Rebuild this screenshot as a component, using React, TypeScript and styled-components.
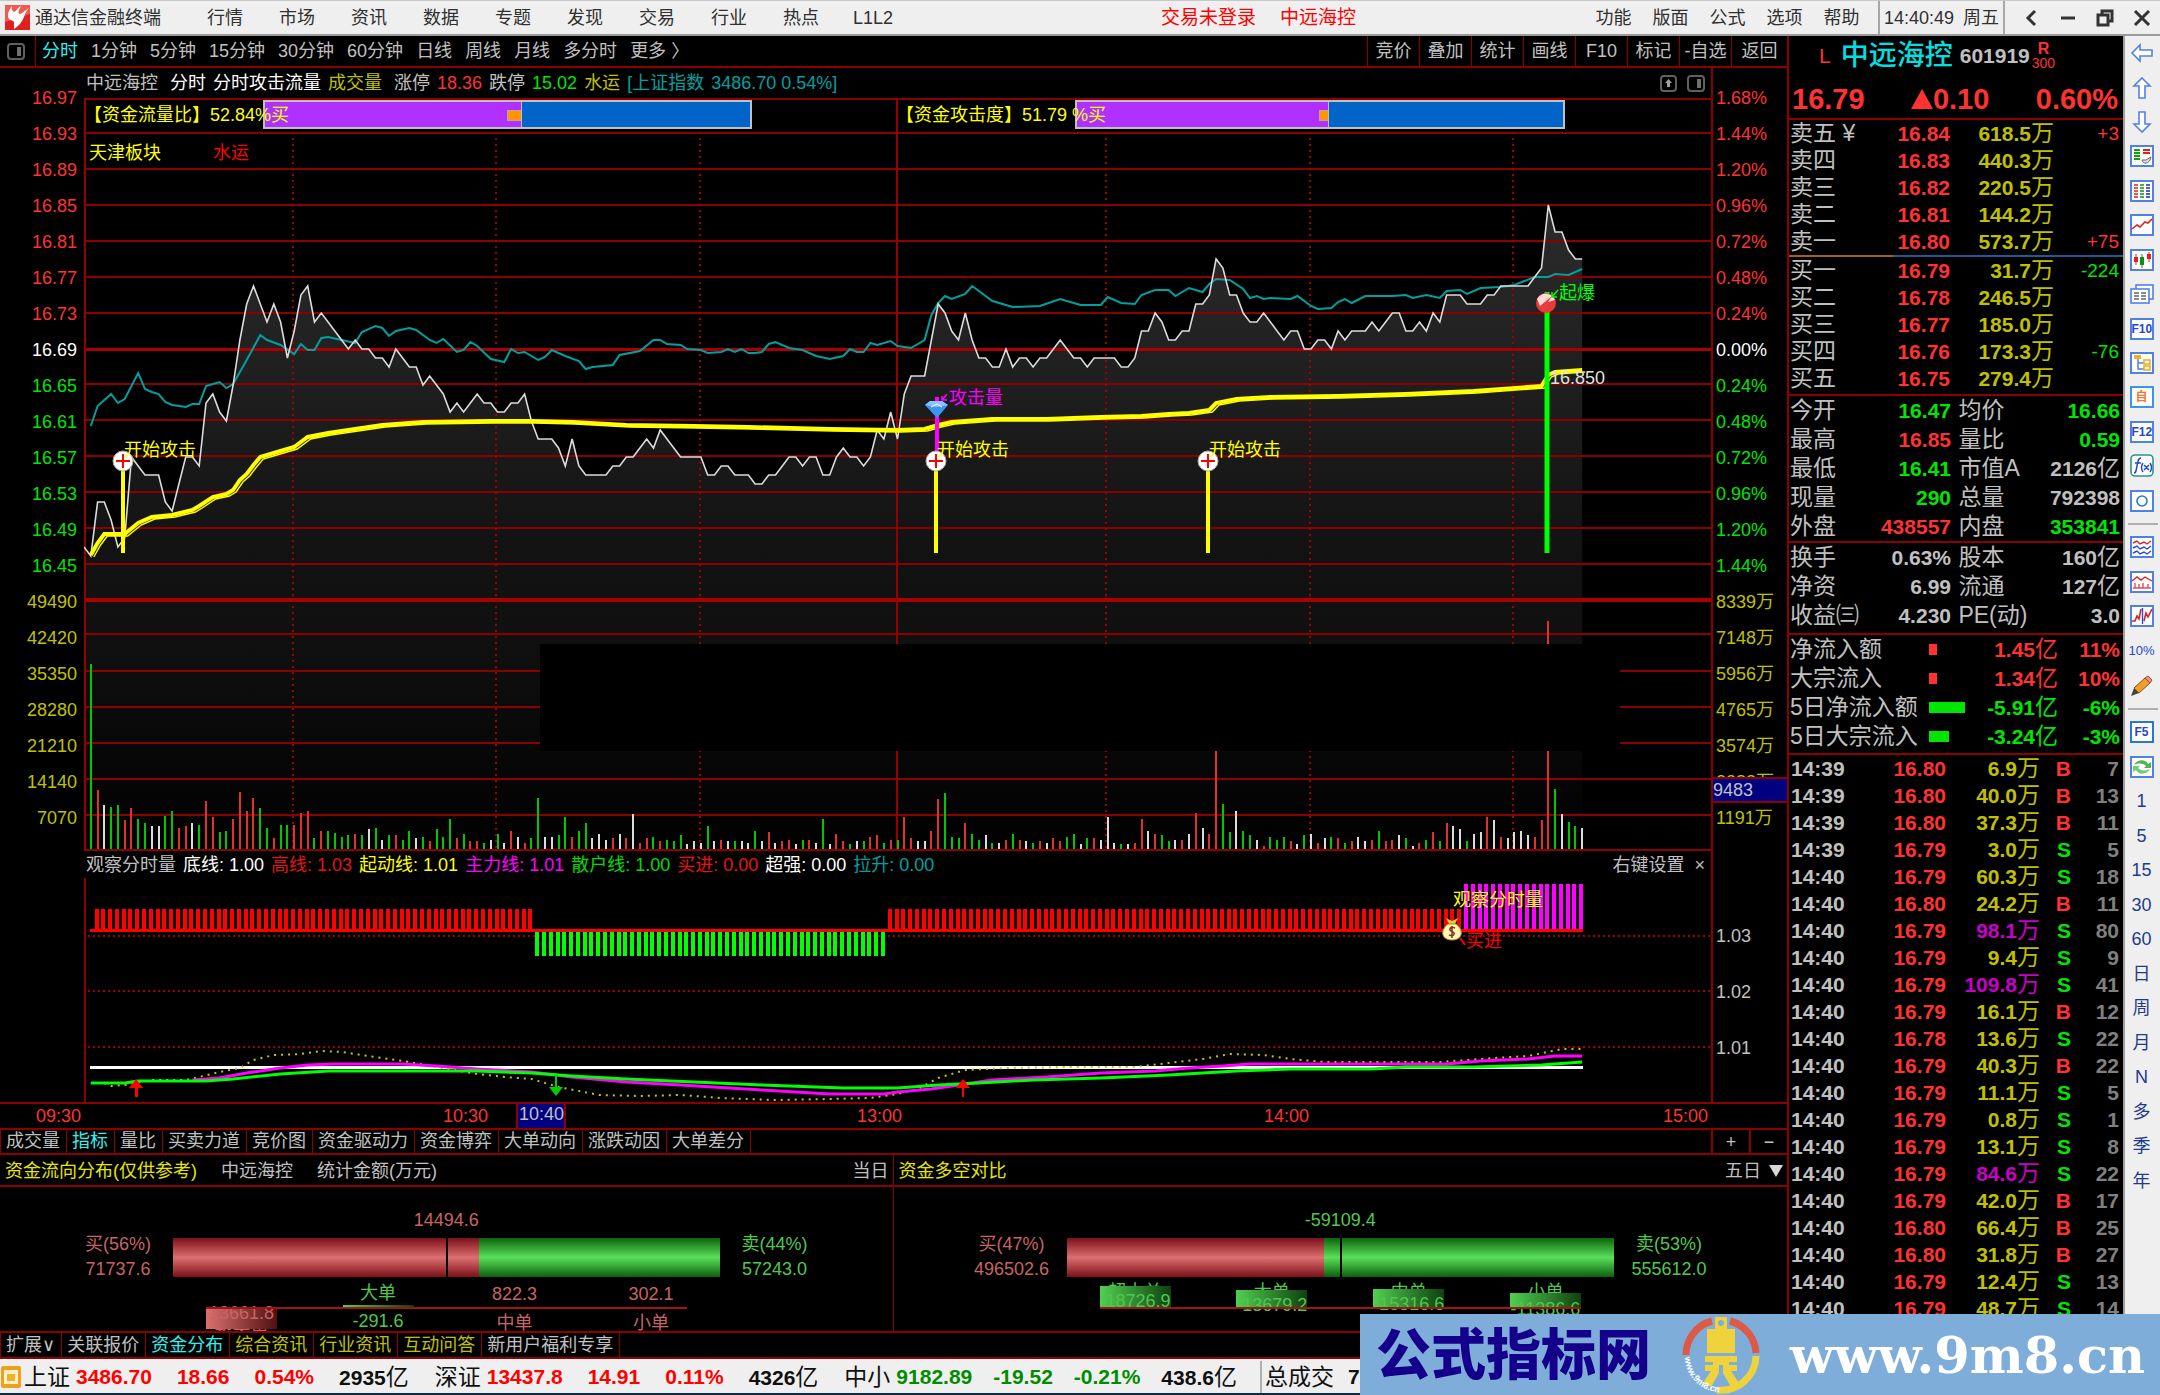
import React from 'react';
import styled, { createGlobalStyle } from 'styled-components';

const RED = '#ff3232';
const GREEN = '#00e600';
const YELLOW = '#c0c000';
const CYAN = '#00a0a0';
const LIGHT = '#c0c0c0';
const PURPLE = '#c800c8';
const RULE = '#8c0000';

const GlobalStyle = createGlobalStyle`
  * { box-sizing: border-box; }
  body {
    margin: 0;
    background: #000;
    color: ${LIGHT};
    font-family: "Liberation Sans", "Noto Sans CJK SC", sans-serif;
    font-size: 18px;
    line-height: 24px;
  }
  button {
    margin: 0;
    padding: 0;
    border: 0;
    background: none;
    color: inherit;
    font: inherit;
    white-space: nowrap;
    cursor: pointer;
  }
  table { border-collapse: collapse; }
  th, td { padding: 0; font-weight: inherit; text-align: left; white-space: nowrap; }
  svg { display: block; }
`;

/* ---------- data ---------- */

const priceTicks = [
  -22, -23, -17, -17, -19, -22, -21, -12, -13, -14, -14, -14, -17, -18, -15, -12, -12, -13, -6, -5,
  -7, -8, -4, 1, 5, 7, 5, 3, 5, 3, -1, 2, 6, 7, 3, 4, 3, 2, 1, 0,
  1, 0, 0, -1, -1, -2, 0, -1, -2, -2, -4, -3, -4, -5, -7, -6, -7, -6, -5, -6,
  -6, -7, -7, -6, -6, -5, -8, -10, -10, -10, -11, -13, -10, -13, -14, -14, -14, -14, -13, -13,
  -12, -12, -11, -10, -11, -9, -10, -11, -12, -12, -12, -12, -14, -14, -13, -13, -14, -14, -14, -15,
  -15, -14, -14, -13, -12, -12, -13, -12, -12, -14, -14, -12, -11, -12, -12, -13, -12, -9, -10, -7,
  -10, -5, -3, -3, -3, 1, 5, 4, 2, 1, 4, 1, -1, -1, -2, -2, 0, -2, -1, -1,
  -2, -1, -1, 0, 1, 0, -1, -1, -2, -1, -1, -1, -1, -2, -2, -1, 2, 2, 4, 3,
  1, 1, 2, 2, 5, 5, 6, 10, 9, 6, 6, 4, 3, 3, 4, 3, 2, 1, 2, 2,
  0, 0, 1, 1, 0, 2, 1, 2, 2, 2, 3, 2, 3, 4, 4, 2, 2, 3, 2, 4,
  3, 6, 6, 6, 5, 5, 5, 6, 6, 7, 7, 7, 7, 7, 8, 9, 16, 13, 13, 11, 10, 10,
];

const volumeBars =
  'g185 r59 w44 g42 g44 r29 r41 g30 g26 w23 w23 g33 g38 r21 r23 w26 g24 r48 r32 g17 g18 r30 r57 r38 r51 g41 g21 r11 g24 g24 ' +
  'r24 r36 r38 g11 r18 g18 g16 g12 g14 r15 g14 w20 g21 w9 g14 r14 g9 g18 w11 g12 r8 g20 g12 g30 r11 g15 r8 r8 g6 w9 ' +
  'g15 w6 r18 w12 r6 g11 g51 w12 w12 g14 g32 r12 g18 g26 w11 w15 w9 r11 w15 r11 w35 r6 r11 g12 r8 g9 g8 g14 w5 w8 ' +
  'w6 g23 w8 r9 w8 g8 w8 w6 g18 w8 r17 w6 r8 r9 w5 g9 r9 w6 g30 w5 r15 r8 g5 w8 g8 r12 r14 g6 r9 g9 ' +
  'r32 r11 w8 w8 r18 r50 g56 g12 g11 r26 g15 g9 w14 g6 w6 r9 g15 r9 w8 g6 r8 w6 r11 r8 g12 g15 w5 g11 r11 w9 ' +
  'w32 w6 g5 w5 r6 r30 w18 r15 g14 g8 w9 r9 w15 r36 w21 r15 r120 g45 g17 w38 g18 g14 w9 r3 g12 g9 g12 r8 w5 g14 ' +
  'w15 r6 w11 g12 r11 g6 r8 w12 w8 r9 g18 r8 r9 w14 g11 w3 r6 g9 r17 g8 r26 w23 w20 g8 w15 w17 r32 w29 r12 w11 ' +
  'w17 w18 w14 r12 r29 r228 g60 w35 g27 g23 w21';

const indexLine =
  '1,426 2,406 4,394 5,403 6,399 8,373 9,389 10,392 11,394 12,402 13,405 15,407 16,404 17,404 18,386 20,382 21,388 22,384 24,360 26,335 27,340 29,345 31,354 32,344 33,350 34,350 35,338 36,337 38,340 40,343 41,332 43,326 44,328 45,336 46,331 48,328 49,330 51,340 52,343 53,339 55,352 56,350 57,342 58,346 60,359 62,362 63,349 64,353 65,352 67,360 68,357 69,350 71,356 73,361 74,369 75,367 78,365 79,355 82,351 84,340 85,340 86,344 88,345 89,349 91,350 92,353 94,352 95,349 96,352 97,349 98,353 99,353 100,352 101,344 102,342 104,348 106,350 108,356 110,359 112,356 113,349 114,352 115,352 116,343 117,345 119,341 120,346 122,348 124,340 125,315 126,303 127,296 128,299 130,294 131,286 132,291 134,301 137,307 141,306 144,299 147,305 150,305 151,297 153,303 155,304 156,295 158,290 160,290 161,296 163,288 165,292 166,284 167,279 169,280 171,289 172,298 173,296 174,299 175,298 178,299 179,296 181,306 182,309 184,308 185,302 186,299 187,303 189,296 193,296 195,295 196,298 198,295 200,298 201,291 203,290 204,294 206,288 209,287 211,285 214,277 216,277 217,274 219,275 221,269';
const averageLine =
  '1,555 2,543 3,534 6,534 8,523 10,517 13,515 16,510 17,506 19,497 21,494 22,490 23,480 24,474 25,465 26,457 28,453 31,447 33,437 36,433 40,429 44,425 50,422 60,421 66,421 72,422 80,425 90,426 98,427 110,429 120,430 124,429 126,425 128,422 134,419 142,419 150,417 156,416 160,414 163,413 166,410 167,403 170,399 175,397 185,396 195,394 205,391 215,386 216,375 217,372 221,370';
const mainForce =
  '16,1080 20,1078 24,1073 29,1068 33,1065 37,1064 47,1064 52,1066 58,1069 66,1072 72,1077 80,1082 88,1085 100,1090 110,1094 118,1094 120,1092 125,1089 130,1084 134,1080 142,1077 150,1073 158,1071 163,1068 168,1066 172,1064 201,1064 206,1061 213,1059 217,1056 221,1056';
const retail =
  '1,1083 6,1083 8,1081 18,1081 22,1079 29,1074 36,1071 58,1071 66,1073 72,1076 80,1079 90,1082 100,1085 112,1088 120,1088 126,1085 132,1083 140,1080 150,1078 160,1075 170,1071 178,1069 190,1069 195,1067 205,1067 215,1065 221,1062';
const starter =
  '3,1083 4,1086 6,1085 10,1080 15,1080 17,1077 20,1072 23,1068 25,1060 28,1055 32,1054 35,1051 38,1052 42,1056 48,1062 52,1067 58,1074 62,1077 66,1079 70,1087 76,1095 82,1096 88,1095 94,1098 102,1100 110,1099 116,1098 120,1094 123,1089 126,1078 130,1070 136,1068 145,1067 155,1067 160,1063 165,1059 169,1054 174,1055 178,1059 183,1062 200,1062 208,1058 213,1056 218,1049 221,1049';

const X0 = 84;
const PLOT_W = 1627;
const mx = (m: number) => X0 + (m * PLOT_W) / 240;
const toPoints = (s: string) =>
  s.split(' ').map((p) => {
    const [m, y] = p.split(',').map(Number);
    return `${mx(m).toFixed(1)},${y}`;
  }).join(' ');
const pct = (x: number) => `${((x - X0) / PLOT_W) * 100}%`;

const leftAxis = ['16.97', '16.93', '16.89', '16.85', '16.81', '16.77', '16.73', '16.69', '16.65', '16.61', '16.57', '16.53', '16.49', '16.45', '49490', '42420', '35350', '28280', '21210', '14140', '7070'];
const rightAxis = ['1.68%', '1.44%', '1.20%', '0.96%', '0.72%', '0.48%', '0.24%', '0.00%', '0.24%', '0.48%', '0.72%', '0.96%', '1.20%', '1.44%', '8339万', '7148万', '5956万', '4765万', '3574万', '2383万', '1191万'];
const axisColor = (i: number) => (i > 13 ? YELLOW : i === 7 ? '#fff' : i < 7 ? RED : GREEN);

const asks = [
  ['卖五', '16.84', '618.5', '+3'], ['卖四', '16.83', '440.3', ''], ['卖三', '16.82', '220.5', ''],
  ['卖二', '16.81', '144.2', ''], ['卖一', '16.80', '573.7', '+75'],
];
const bids = [
  ['买一', '16.79', '31.7', '-224'], ['买二', '16.78', '246.5', ''], ['买三', '16.77', '185.0', ''],
  ['买四', '16.76', '173.3', '-76'], ['买五', '16.75', '279.4', ''],
];
type Stat = [string, string, string, string, string, string, string];
const stats1: Stat[] = [
  ['今开', '16.47', GREEN, '均价', '16.66', '', GREEN],
  ['最高', '16.85', RED, '量比', '0.59', '', GREEN],
  ['最低', '16.41', GREEN, '市值A', '2126', '亿', LIGHT],
  ['现量', '290', GREEN, '总量', '792398', '', LIGHT],
  ['外盘', '438557', RED, '内盘', '353841', '', GREEN],
];
const stats2: Stat[] = [
  ['换手', '0.63%', LIGHT, '股本', '160', '亿', LIGHT],
  ['净资', '6.99', LIGHT, '流通', '127', '亿', LIGHT],
  ['收益㈢', '4.230', LIGHT, 'PE(动)', '3.0', '', LIGHT],
];
const flows: [string, string, string, string, number][] = [
  ['净流入额', '1.45', '11%', RED, 8],
  ['大宗流入', '1.34', '10%', RED, 8],
  ['5日净流入额', '-5.91', '-6%', GREEN, 36],
  ['5日大宗流入', '-3.24', '-3%', GREEN, 20],
];
const ticks = [
  '14:39 16.80 6.9 B 7', '14:39 16.80 40.0 B 13', '14:39 16.80 37.3 B 11', '14:39 16.79 3.0 S 5',
  '14:40 16.79 60.3 S 18', '14:40 16.80 24.2 B 11', '14:40 16.79 98.1 S 80', '14:40 16.79 9.4 S 9',
  '14:40 16.79 109.8 S 41', '14:40 16.79 16.1 B 12', '14:40 16.78 13.6 S 22', '14:40 16.79 40.3 B 22',
  '14:40 16.79 11.1 S 5', '14:40 16.79 0.8 S 1', '14:40 16.79 13.1 S 8', '14:40 16.79 84.6 S 22',
  '14:40 16.79 42.0 B 17', '14:40 16.80 66.4 B 25', '14:40 16.80 31.8 B 27', '14:40 16.79 12.4 S 13',
  '14:40 16.79 48.7 S 14',
].map((r) => r.split(' '));

/* ---------- shell ---------- */

const Page = styled.div`
  position: relative;
  display: flex;
  flex-direction: column;
  min-height: 100vh;
  overflow: hidden;
  background: #000;
`;
const TopBar = styled.header`
  display: flex;
  align-items: center;
  height: 36px;
  padding-left: 5px;
  border-top: 1px solid #c8c8c8;
  border-bottom: 2px solid #9a9a9a;
  background: #efefef;
  color: #303030;
`;
const Brand = styled.div`
  display: flex;
  align-items: center;
  gap: 5px;
  width: 184px;
`;
const Menu = styled.nav<{ $w: number }>`
  display: flex;
  button { width: ${(p) => p.$w}px; }
`;
const Notice = styled.div`
  display: flex;
  flex: 1;
  gap: 24px;
  padding-left: 252px;
  color: #f00;
  font-size: 19px;
`;
const Clock = styled.div`
  display: flex;
  gap: 9px;
  height: 33px;
  align-items: center;
  padding: 0 4px;
  margin-left: 8px;
  border-left: 2px solid #a8a8a8;
  border-right: 2px solid #a8a8a8;
`;
const WindowKeys = styled.div`
  display: flex;
  width: 155px;
  padding-left: 8px;
  button { flex: 1; display: flex; justify-content: center; }
`;
const Body = styled.div`
  display: flex;
  flex: 1;
`;
const Main = styled.main`
  display: flex;
  flex: 1;
  flex-direction: column;
  min-width: 0;
`;

const ToolRow = styled.div`
  display: flex;
  align-items: stretch;
  height: 32px;
  border-bottom: 2px solid ${RULE};
`;
const IconCell = styled.button`
  display: flex;
  align-items: center;
  width: 36px;
  padding-left: 7px;
  border-right: 1px solid ${RULE};
`;
const Periods = styled.div`
  display: flex;
  flex: 1;
  gap: 13px;
  padding-left: 6px;
`;
const Tone = styled.button<{ $c?: string }>`
  color: ${(p) => p.$c || 'inherit'};
`;
const ToolCell = styled.button`
  width: 52px;
  border-left: 1px solid ${RULE};
  &:last-child { width: 56px; }
`;

/* ---------- charts ---------- */

const ChartGrid = styled.section`
  display: grid;
  grid-template-columns: 84px 1fr 76px;
`;
const Axis = styled.div<{ $side: 'left' | 'right' }>`
  position: relative;
  padding-top: 12px;
  ${(p) => (p.$side === 'left' ? 'padding-right: 7px; text-align: right;' : `padding-left: 3px; border-left: 2px solid ${RULE};`)}
`;
const AxisLabel = styled.div<{ $c: string }>`
  height: 36px;
  line-height: 36px;
  color: ${(p) => p.$c};
`;
const AxisBadge = styled.div`
  position: absolute;
  left: 0;
  right: 0;
  top: 709px;
  height: 26px;
  border: solid ${RULE};
  border-width: 2px 0;
  background: #000080;
  line-height: 22px;
`;
const Column = styled.div`
  position: relative;
  min-width: 0;
`;
const LegendRow = styled.div<{ $h: number }>`
  display: flex;
  align-items: center;
  gap: 7px;
  height: ${(p) => p.$h}px;
  padding: 0 6px 0 2px;
  white-space: nowrap;
`;
const Txt = styled.span<{ $c?: string }>`
  color: ${(p) => p.$c || 'inherit'};
`;
const Right = styled.div`
  display: flex;
  align-items: center;
  gap: 10px;
  margin-left: auto;
`;
const Pin = styled.div<{ $c: string }>`
  position: absolute;
  color: ${(p) => p.$c};
  line-height: 24px;
  white-space: nowrap;
`;
const SubAxis = styled.div`
  grid-column: 3;
  padding: 57px 0 0 3px;
  border-left: 2px solid ${RULE};
  line-height: 56px;
`;
const SubColumn = styled(Column)`
  grid-column: 2;
`;
const Plot = styled.svg<{ $h: number }>`
  width: 100%;
  height: ${(p) => p.$h}px;
`;
const TimeAxis = styled.div`
  position: relative;
  display: grid;
  grid-template-columns: 84px 407fr 414fr 407fr 399fr 76px;
  height: 28px;
  border-top: 2px solid ${RULE};
  border-bottom: 2px solid ${RULE};
  color: ${RED};
  text-align: right;
  span { padding-right: 3px; }
`;
const TimeBadge = styled.div`
  position: absolute;
  top: 0;
  width: 50px;
  height: 24px;
  border: solid ${RULE};
  border-width: 0 2px;
  background: #000080;
  color: ${LIGHT};
  text-align: center;
  line-height: 20px;
`;
const Tabs = styled.div<{ $h: number }>`
  display: flex;
  height: ${(p) => p.$h}px;
  border-left: 1px solid ${RULE};
  border-bottom: 2px solid ${RULE};
`;
const BottomTabs = styled(Tabs)`
  border-top: 2px solid ${RULE};
  font-family: "Liberation Sans", "DejaVu Sans", "Noto Sans CJK SC", sans-serif;
`;
const Tab = styled.button<{ $c?: string }>`
  padding: 0 6px 0 5px;
  border-right: 1px solid ${RULE};
  color: ${(p) => p.$c || 'inherit'};
  line-height: 23px;
`;
const ZoomKeys = styled.div`
  display: flex;
  margin-left: auto;
  button { width: 38px; border-left: 2px solid ${RULE}; }
`;

/* ---------- money flow ---------- */

const FlowPair = styled.section`
  display: grid;
  grid-template-columns: 1fr 1fr;
`;
const FlowPanel = styled.div`
  border-right: 1px solid ${RULE};
  &:last-child { border-right: 0; }
`;
const FlowTitle = styled.div`
  display: flex;
  align-items: center;
  gap: 24px;
  height: 32px;
  padding: 2px 4px 0 5px;
  border-bottom: 2px solid ${RULE};
  button { display: flex; align-items: center; gap: 8px; margin-left: auto; }
`;
const Net = styled.div<{ $c: string }>`
  padding-top: 21px;
  color: ${(p) => p.$c};
  text-align: center;
`;
const Balance = styled.div`
  display: grid;
  grid-template-columns: 173px 1fr 173px;
  align-items: center;
`;
const Side = styled.div<{ $c: string; $buy?: boolean }>`
  width: 110px;
  justify-self: ${(p) => (p.$buy ? 'end' : 'start')};
  color: ${(p) => p.$c};
  line-height: 25px;
  text-align: center;
`;
const Meter = styled.div`
  position: relative;
  display: flex;
  height: 39px;
`;
const Buy = styled.div`
  background: linear-gradient(#7c1018, #dc7070 50%, #7c1018);
`;
const Sell = styled.div`
  flex: 1;
  background: linear-gradient(#0c640c, #5ae05a 50%, #0c600c);
`;
const Middle = styled.div`
  position: absolute;
  left: 50%;
  top: 0;
  width: 2px;
  height: 100%;
  background: #000;
`;
const Detail = styled.div`
  position: relative;
  display: flex;
  justify-content: space-between;
  height: 49px;
  margin: 0 206px;
  overflow: hidden;
`;
const Baseline = styled.div`
  position: absolute;
  left: 0;
  right: 0;
  top: 25px;
  height: 2px;
  background: #a01414;
`;
const Item = styled.div<{ $c: string }>`
  position: relative;
  width: 71px;
  color: ${(p) => p.$c};
  text-align: center;
`;
const ItemBar = styled.div<{ $up: boolean }>`
  position: absolute;
  left: 0;
  width: 71px;
  background: ${(p) => (p.$up ? 'linear-gradient(90deg, #dc7070, #501010)' : 'linear-gradient(90deg, #50d050, #104010)')};
`;
const ItemText = styled.span`
  position: absolute;
  left: 50%;
  transform: translateX(-50%);
  line-height: 20px;
  white-space: nowrap;
`;

/* ---------- quote ---------- */

const Quote = styled.aside`
  width: 336px;
  border-left: 2px solid ${RULE};
  overflow: hidden;
`;
const QuoteHead = styled.div`
  height: 84px;
  border-bottom: 2px solid ${RULE};
`;
const NameRow = styled.div`
  display: flex;
  align-items: center;
  height: 40px;
  padding-left: 30px;
  color: ${RED};
  font-size: 21px;
  line-height: 40px;
`;
const Name = styled.h1`
  margin: 0 7px 0 10px;
  color: #00e0e0;
  font-size: 28px;
  font-weight: 500;
`;
const Code = styled.span`
  color: ${LIGHT};
  font-weight: bold;
`;
const Flags = styled.span`
  display: flex;
  flex-direction: column;
  padding-left: 2px;
  font-size: 14px;
  line-height: 15px;
  text-align: center;
  b { font-size: 16px; }
`;
const LastRow = styled.div`
  display: flex;
  justify-content: space-between;
  padding: 3px 5px 0 3px;
  color: ${RED};
  font-size: 29px;
  font-weight: bold;
  line-height: 40px;
`;
const Change = styled.span`
  display: flex;
  align-items: center;
`;
const Sheet = styled.table<{ $row: number }>`
  width: 100%;
  table-layout: fixed;
  font-size: 21px;
  font-weight: bold;
  td, th { height: ${(p) => p.$row}px; line-height: ${(p) => p.$row}px; }
  th { padding-left: 1px; font-size: 23px; font-weight: normal; }
`;
const Group = styled.div<{ $pb?: number }>`
  padding-bottom: ${(p) => p.$pb || 0}px;
  border-bottom: 2px solid ${RULE};
`;
const Cell = styled.td<{ $c?: string; $pr?: number; $light?: boolean }>`
  && {
    padding-right: ${(p) => p.$pr || 0}px;
    color: ${(p) => p.$c || LIGHT};
    text-align: right;
    ${(p) => (p.$light ? 'font-size: 19px; font-weight: normal;' : '')}
  }
`;
const TimeCell = styled.td`
  && { padding-left: 2px; }
`;
const Unit = styled.span`
  font-size: 23px;
  font-weight: normal;
  line-height: 20px;
`;
const SplitRule = styled.div`
  height: 2px;
  background: linear-gradient(90deg, #a06414 31%, #1e5a96 31%);
`;
const FlowBar = styled.div<{ $c: string }>`
  height: 11px;
  background: ${(p) => p.$c};
`;

/* ---------- right tool strip ---------- */

const Strip = styled.nav`
  display: flex;
  flex-direction: column;
  width: 37px;
  border-left: 2px solid #a0a0a0;
  background: #efefef;
  color: #1e3c8c;
`;
const StripGroup = styled.div<{ $h: number }>`
  display: flex;
  flex-direction: column;
  height: ${(p) => p.$h}px;
  button { display: flex; flex: 1; align-items: center; justify-content: center; padding-right: 2px; }
`;
const StripRule = styled.hr`
  width: 30px;
  margin: 5px auto;
  border: 0;
  border-top: 2px solid #b0b0b0;
`;
const Small = styled.span`
  color: #2846c8;
  font-size: 13px;
`;

/* ---------- footer ---------- */

const Status = styled.footer`
  display: flex;
  align-items: center;
  height: 36px;
  padding: 2px 0 0 1px;
  border-bottom: 2px solid #102840;
  background: #efefef;
  color: #101010;
  font-size: 21px;
  font-weight: bold;
  white-space: nowrap;
`;
const Market = styled.div<{ $c: string; $gap: number }>`
  display: flex;
  gap: ${(p) => p.$gap}px;
  align-items: center;
  margin: 0 23px 0 3px;
  color: ${(p) => p.$c};
`;
const Cjk = styled.span`
  color: #101010;
  font-size: 23px;
  font-weight: normal;
`;
const Amount = styled.span`
  color: #101010;
`;
const Lead = styled.span`
  display: flex;
  align-items: center;
  gap: 6px;
`;
const Turnover = styled(Lead)`
  gap: 14px;
  height: 32px;
  padding-left: 3px;
  border-left: 2px solid #b0b0b0;
`;
const Banner = styled.a`
  position: absolute;
  right: 0;
  bottom: 0;
  display: flex;
  align-items: center;
  width: 800px;
  height: 81px;
  padding-left: 16px;
  background: #7fadda;
  color: #14008a;
  text-decoration: none;
  white-space: nowrap;
`;
const BannerName = styled.span`
  width: 305px;
  font-size: 55px;
  font-weight: 900;
  line-height: 80px;
`;
const BannerUrl = styled.span`
  margin-left: 29px;
  color: #fff;
  font-family: "DejaVu Serif", serif;
  font-size: 51px;
  font-weight: bold;
  line-height: 76px;
`;

/* ---------- drawings ---------- */

const BrandMark = () => (
  <svg width="25" height="25" viewBox="0 0 25 25" aria-hidden="true">
    <rect width="25" height="25" fill="#e02020" />
    <path d="M0 0H25V9L0 17Z" fill="#f05a50" />
    <path d="M7 1C3 6 2 11 4 14C6 16 8 15 9 17L9 24C14 21 17 17 19 12C20 8 22 5 24 3C20 5 18 8 15 9C12 9 14 5 16 1C12 3 11 7 9 7C7 6 6 4 7 1Z" fill="#fff" />
  </svg>
);
const SplitIcon = () => (
  <svg width="18" height="17" viewBox="0 0 18 17" fill="none" aria-hidden="true">
    <rect x="1" y="1" width="16" height="15" rx="3" stroke="#606060" strokeWidth="2" />
    <rect x="10" y="4" width="4" height="9" fill="#707070" />
  </svg>
);
const UpBoxIcon = () => (
  <svg width="17" height="17" viewBox="0 0 17 17" fill="none" aria-hidden="true">
    <rect x="1" y="1" width="15" height="15" rx="3" stroke="#606060" strokeWidth="2" />
    <path d="M8.5 4L12 8H10V12H7V8H5Z" fill="#a0a0a0" />
  </svg>
);

const Cross = ({ x }: { x: number }) => (
  <g>
    <path d={`M${x} 465V553`} stroke="#ff0" strokeWidth="4" />
    <circle cx={x} cy="461" r="10" fill="#fff" stroke="#b0a8a0" />
    <path d={`M${x - 7} 461H${x + 7}M${x} 454V468`} stroke="#f00" strokeWidth="2" />
  </g>
);

const lineYs = [98, 132, 168, 204, 240, 276, 312, 383, 419, 455, 491, 527, 563, 633, 670, 706, 742, 778, 814, 850];
const dottedXs = [293, 496, 700, 1106, 1310, 1513];

function PriceChart() {
  const pts = priceTicks.map((t, i) => `${mx(i).toFixed(1)},${349 - t * 9}`);
  const fill: Record<string, string> = { r: '#e03030', g: '#00c800', w: '#dcdcdc' };
  return (
    <Plot $h={753} viewBox="84 98 1627 753" preserveAspectRatio="none" role="img" aria-label="分时走势">
      <defs>
        <linearGradient id="shade" gradientUnits="userSpaceOnUse" x1="0" y1="200" x2="0" y2="850">
          <stop offset="0" stopColor="#2c2c2c" />
          <stop offset="0.55" stopColor="#121212" />
          <stop offset="0.68" stopColor="#101010" />
          <stop offset="1" stopColor="#000" />
        </linearGradient>
      </defs>
      <polygon points={`84,850 ${pts.join(' ')} ${mx(221).toFixed(1)},850`} fill="url(#shade)" />
      <g shapeRendering="crispEdges">
        {lineYs.map((y) => <rect key={y} x="84" y={y === 850 ? 849 : y} width="1627" height="2" fill={RULE} />)}
        <rect x="84" y="348" width="1627" height="3" fill="#aa0000" />
        <rect x="84" y="598" width="1627" height="4" fill="#aa0000" />
        <path d="M84.5 98V850M896.5 98V850" stroke="#960000" strokeWidth="2" />
        {dottedXs.map((x) => <path key={x} d={`M${x} 132V850`} stroke="#a00000" strokeWidth="2" strokeDasharray="2 4" />)}
      </g>
      <g shapeRendering="crispEdges">
        {volumeBars.split(' ').map((b, i) => {
          const h = Number(b.slice(1));
          return <rect key={i} x={Math.round(mx(i + 1)) - 1} y={849 - h} width="2" height={h} fill={fill[b[0]]} />;
        })}
      </g>
      <rect x="540" y="644" width="1080" height="107" fill="#000" />
      <polyline points={toPoints(indexLine)} fill="none" stroke={CYAN} strokeWidth="2" />
      <polyline points={pts.join(' ')} fill="none" stroke="#dcdcdc" strokeWidth="1.6" />
      <polyline points={toPoints(averageLine)} fill="none" stroke="#ff0" strokeWidth="4" />
      <polyline points={toPoints(averageLine)} fill="none" stroke="#ff0" strokeWidth="1.4" transform="translate(3 2)" />
      <g shapeRendering="crispEdges">
        <rect x="264" y="101" width="257" height="27" fill="#b030ff" />
        <rect x="521" y="101" width="230" height="27" fill="#0064c8" />
        <rect x="507" y="110" width="14" height="10" fill="#ff9600" stroke="#c0a0a0" />
        <rect x="264" y="101" width="487" height="27" fill="none" stroke="#c0c0c0" strokeWidth="2" />
        <path d="M521.5 101V128" stroke="#c0c0c0" />
        <rect x="1076" y="101" width="252" height="27" fill="#b030ff" />
        <rect x="1328" y="101" width="236" height="27" fill="#0064c8" />
        <rect x="1319" y="110" width="9" height="10" fill="#ff9600" stroke="#c0a0a0" />
        <rect x="1076" y="101" width="488" height="27" fill="none" stroke="#c0c0c0" strokeWidth="2" />
        <path d="M1328.5 101V128" stroke="#c0c0c0" />
      </g>
      <path d="M937 397V452" stroke="#f0f" strokeWidth="4" />
      <path d="M925 405L930 401H942L948 405L937 418Z" fill="#3c96f0" />
      <path d="M925 405L930 401H942L948 405L937 407Z" fill="#8cc0ff" />
      <path d="M931 407L937 404L942 407" stroke="#fff" fill="none" />
      <path d="M947 394L942 400M942 396V400H947" stroke="#f0f" fill="none" strokeWidth="1.5" />
      <Cross x={123} />
      <Cross x={936} />
      <Cross x={1208} />
      <path d="M1547 292V553" stroke="#0f0" strokeWidth="5" />
      <circle cx="1546" cy="303" r="10" fill="#e63c3c" />
      <path d="M1537 299C1541 292 1551 292 1555 300L1548 302L1552 296L1540 306" fill="#ffd8d8" />
      <path d="M1558 290L1552 297M1552 292V297H1557" stroke="#0f0" fill="none" strokeWidth="1.5" />
    </Plot>
  );
}

function SubChart() {
  const minutes = Array.from({ length: 220 }, (_, i) => i + 2);
  return (
    <Plot $h={224} viewBox="84 878 1627 224" preserveAspectRatio="none" role="img" aria-label="观察分时量">
      <g shapeRendering="crispEdges">
        <path d="M84.5 878V1102" stroke={RULE} strokeWidth="2" />
        {[936, 991, 1047].map((y) => <path key={y} d={`M88 ${y}H1711`} stroke="#a00000" strokeWidth="2" strokeDasharray="2 3" />)}
        {minutes.map((m) => {
          const x = Math.round(mx(m)) - 3;
          if (m > 66 && m < 119) return <rect key={m} x={x} y="931" width="4" height="25" fill="#0f0" />;
          if (m > 203) return <rect key={m} x={x} y="884" width="4" height="47" fill="#f0f" />;
          return <rect key={m} x={x} y="909" width="4" height="22" fill="#f00" />;
        })}
        <rect x="90" y="929" width="1493" height="3" fill="#f00" />
        <rect x="90" y="1066" width="1493" height="3" fill="#fff" />
      </g>
      <polyline points={toPoints(starter)} fill="none" stroke="#c8c800" strokeWidth="2" strokeDasharray="2 5" />
      <polyline points={toPoints(mainForce)} fill="none" stroke="#f0f" strokeWidth="3" />
      <polyline points={toPoints(retail)} fill="none" stroke="#0f0" strokeWidth="3" />
      <path d="M136 1079L143 1088H138V1097H135V1088H129ZM963 1079L970 1088H964V1097H962V1088H956Z" fill="#f00" />
      <path d="M556 1096L549 1087H555V1075H557V1087H563Z" fill="#00d000" />
      <path d="M1460 938L1465 945" stroke="#f00" strokeWidth="2" />
      <path d="M1446 918L1452 921L1458 918L1455 924H1449Z" fill="#e0c830" />
      <path d="M1448 924H1456C1464 930 1463 940 1452 940C1441 940 1440 930 1448 924Z" fill="#fff6b0" stroke="#b09030" />
      <path d="M1455 928C1450 926 1448 930 1452 931.5C1456 933 1454 937 1449 935M1452 926V938" stroke="#803030" strokeWidth="1.5" fill="none" />
    </Plot>
  );
}

const Framed = ({ children, color = '#5082e6' }: { children?: React.ReactNode; color?: string }) => (
  <svg width="24" height="22" viewBox="0 0 24 22" fill="none" aria-hidden="true">
    <rect x="1" y="1" width="22" height="20" fill="#fff" stroke={color} strokeWidth="2" />
    {children}
  </svg>
);
const Arrow = ({ turn }: { turn: number }) => (
  <svg width="24" height="24" viewBox="0 0 24 24" fill="none" aria-hidden="true">
    <path d="M2 12L10 4V9H22V15H10V20Z" fill="#fff" stroke="#5082e6" strokeWidth="1.6" transform={`rotate(${turn} 12 12)`} />
  </svg>
);
const FrameLabel = styled.span<{ $c: string; $b: string }>`
  width: 24px;
  height: 22px;
  border: 2px solid ${(p) => p.$b};
  background: #fff;
  color: ${(p) => p.$c};
  font-size: 12px;
  font-weight: bold;
  line-height: 18px;
  text-align: center;
`;

const stripTop: [string, React.ReactNode][] = [
  ['后退', <Arrow turn={0} />],
  ['上翻', <Arrow turn={90} />],
  ['下翻', <Arrow turn={270} />],
  ['报价', <Framed><path d="M4 5H10M4 8H10M4 11H10M4 14H10" stroke="#10a010" strokeWidth="2" /><path d="M13 5H20M13 8H20" stroke="#e02020" strokeWidth="2" /><path d="M12 15C13 20 20 19 21 12L16 15Z" fill="#ddd" stroke="#666" /></Framed>],
  ['列表', <Framed><g strokeWidth="1.6"><path d="M4 5H8M4 8H8M4 11H8M4 14H8M4 17H8" stroke="#e02020" /><path d="M10 5H14M10 8H14M10 11H14M10 14H14M10 17H14" stroke="#109010" /><path d="M16 5H20M16 8H20M16 11H20M16 14H20M16 17H20" stroke="#2020d0" /></g></Framed>],
  ['走势', <Framed><path d="M2 15L7 11L10 13L15 8L18 9L22 5" stroke="#e02020" strokeWidth="1.6" /></Framed>],
  ['K线', <Framed><path d="M6 5V16M19 3V13" stroke="#e02020" /><path d="M12 5V19" stroke="#109010" /><path d="M4 8H8V13H4ZM17 5H21V10H17Z" fill="#e02020" /><path d="M10 8H14V16H10Z" fill="#109010" /></Framed>],
  ['多窗', <svg width="24" height="22" viewBox="0 0 24 22" fill="none" aria-hidden="true"><rect x="6" y="2" width="17" height="14" fill="#fff" stroke="#5082e6" strokeWidth="1.6" /><rect x="1" y="6" width="18" height="14" fill="#fff" stroke="#5082e6" strokeWidth="1.6" /><path d="M4 10H9M11 10H16M4 13H9M11 13H16M4 16H9M11 16H16" stroke="#666" strokeWidth="1.4" /></svg>],
  ['F10', <FrameLabel $c="#2846c8" $b="#5082e6">F10</FrameLabel>],
  ['板块', <Framed><path d="M8 6V17H14M8 11H14" stroke="#5082e6" strokeWidth="1.5" /><rect x="4" y="3" width="7" height="4" fill="#f0b020" /><rect x="14" y="8" width="6" height="4" fill="#fff" stroke="#f0b020" strokeWidth="1.6" /><rect x="14" y="14" width="6" height="4" fill="#fff" stroke="#f0b020" strokeWidth="1.6" /></Framed>],
  ['自选', <FrameLabel $c="#f07830" $b="#3c96e6">自</FrameLabel>],
  ['F12', <FrameLabel $c="#2846c8" $b="#5082e6">F12</FrameLabel>],
  ['公式', <svg width="24" height="24" viewBox="0 0 24 24" fill="none" aria-hidden="true"><rect x="1" y="1" width="22" height="21" rx="4" fill="#fff" stroke="#28968c" strokeWidth="1.6" /><path d="M11 4C8 4 8 7 7 12C6 17 6 19 4 19M5 9H11M13 9C11 12 11 15 13 18M20 9C22 12 22 15 20 18M14 11L19 16M19 11L14 16" stroke="#2846c8" strokeWidth="1.5" /></svg>],
  ['圆环', <Framed><circle cx="12" cy="11" r="5" stroke="#2878c8" strokeWidth="1.6" /></Framed>],
];
const stripMid: [string, React.ReactNode][] = [
  ['叠加', <Framed><path d="M3 7L7 5L10 8L14 6L17 8L21 5" stroke="#e02020" strokeWidth="1.4" /><path d="M3 12L7 10L10 13L14 11L17 13L21 10M3 17L7 15L10 18L14 16L17 18L21 15" stroke="#2846e0" strokeWidth="1.4" /></Framed>],
  ['分布', <Framed><path d="M2 10L7 6L11 9L15 6L22 10" stroke="#e02020" strokeWidth="1.4" /><path d="M3 17H21M5 17V12M9 17V13M13 17V12M18 17V13" stroke="#e05050" strokeWidth="1.4" /></Framed>],
  ['波动', <Framed><path d="M2 16H5L7 11L9 14L11 4M14 16L16 8L18 12L22 4" stroke="#e02020" strokeWidth="1.6" /><path d="M12.5 3V19" stroke="#2846e0" strokeWidth="1.4" /></Framed>],
  ['涨幅', <Small>10%</Small>],
  ['画笔', <svg width="24" height="24" viewBox="0 0 24 24" aria-hidden="true"><path d="M1 22L4 14L9 19Z" fill="#444" /><path d="M4 14L15 4L20 9L9 19Z" fill="#f0a028" stroke="#905010" /><path d="M15 4L18 2L22 6L20 9Z" fill="#f09080" stroke="#905040" /></svg>],
];
const stripLow: [string, React.ReactNode][] = [
  ['F5', <FrameLabel $c="#2846c8" $b="#2878d2">F5</FrameLabel>],
  ['刷新', <Framed><path d="M4 9C7 3 16 3 18 8L21 6V12H14L16 10C13 7 8 7 4 9Z" fill="#50b450" /><path d="M20 13C17 19 8 19 6 14L3 16V10H10L8 12C11 15 16 15 20 13Z" fill="#78c878" /></Framed>],
  ...['1', '5', '15', '30', '60', '日', '周', '月', 'N', '多', '季', '年'].map((t): [string, React.ReactNode] => [t, <span>{t}</span>]),
];

const StripButtons = ({ items, h }: { items: [string, React.ReactNode][]; h: number }) => (
  <StripGroup $h={h}>
    {items.map(([label, icon]) => <button key={label} type="button" aria-label={label}>{icon}</button>)}
  </StripGroup>
);

const Book = ({ rows }: { rows: string[][] }) => (
  <Sheet $row={27}>
    <colgroup><col style={{ width: 80 }} /><col style={{ width: 81 }} /><col style={{ width: 104 }} /><col /></colgroup>
    <tbody>
      {rows.map(([n, p, v, d]) => (
        <tr key={n}>
          <th scope="row">{n}{n === '卖五' && ' ¥'}</th>
          <Cell $c={RED}>{p}</Cell>
          <Cell $c={YELLOW}>{v}<Unit>万</Unit></Cell>
          <Cell $light $pr={4} $c={d[0] === '-' ? GREEN : RED}>{d}</Cell>
        </tr>
      ))}
    </tbody>
  </Sheet>
);
const Stats = ({ rows }: { rows: Stat[] }) => (
  <Sheet $row={29}>
    <colgroup><col style={{ width: 76 }} /><col style={{ width: 86 }} /><col style={{ width: 80 }} /><col /></colgroup>
    <tbody>
      {rows.map(([a, av, ac, b, bv, unit, bc]) => (
        <tr key={a}>
          <th scope="row">{a}</th>
          <Cell $c={ac}>{av}</Cell>
          <th scope="row">&nbsp;{b}</th>
          <Cell $pr={3} $c={bc}>{bv}{unit && <Unit>{unit}</Unit>}</Cell>
        </tr>
      ))}
    </tbody>
  </Sheet>
);

type DetailItem = { name: string; value: string; up: boolean; top: number; h: number; nameTop: number; valueTop: number };
const today: DetailItem[] = [
  { name: '超大单', value: '13661.8', up: true, top: 27, h: 20, nameTop: 41, valueTop: 21 },
  { name: '大单', value: '-291.6', up: false, top: 23, h: 2, nameTop: 1, valueTop: 29 },
  { name: '中单', value: '822.3', up: true, top: 26, h: 1, nameTop: 31, valueTop: 2 },
  { name: '小单', value: '302.1', up: true, top: 26, h: 1, nameTop: 31, valueTop: 2 },
];
const fiveDay: DetailItem[] = [
  { name: '超大单', value: '-18726.9', up: false, top: 4, h: 21, nameTop: 0, valueTop: 9 },
  { name: '大单', value: '-13679.2', up: false, top: 8, h: 17, nameTop: 0, valueTop: 13 },
  { name: '中单', value: '-15316.6', up: false, top: 7, h: 18, nameTop: 0, valueTop: 12 },
  { name: '小单', value: '-11386.6', up: false, top: 11, h: 14, nameTop: 0, valueTop: 17 },
];
const SOFT_RED = '#c86464';
const SOFT_GREEN = '#50c850';

type FlowProps = {
  title: string; extra?: string[]; range: string; caret?: boolean; net: string; netColor: string;
  buy: [string, string]; sell: [string, string]; share: number; items: DetailItem[];
};
function Flow({ title, extra = [], range, caret, net, netColor, buy, sell, share, items }: FlowProps) {
  return (
    <FlowPanel>
      <FlowTitle>
        <Txt $c="#e6e600">{title}</Txt>
        {extra.map((e) => <span key={e}>{e}</span>)}
        <button type="button">
          {range}
          {caret && <svg width="14" height="12" viewBox="0 0 14 12" aria-hidden="true"><path d="M0 0H14L7 12Z" fill="#d8d8d8" /></svg>}
        </button>
      </FlowTitle>
      <Net $c={netColor}>{net}</Net>
      <Balance>
        <Side $c={SOFT_RED} $buy>{buy[0]}<br />{buy[1]}</Side>
        <Meter><Buy style={{ width: `${share}%` }} /><Sell /><Middle /></Meter>
        <Side $c={SOFT_GREEN}>{sell[0]}<br />{sell[1]}</Side>
      </Balance>
      <Detail>
        {items.map((it) => (
          <Item key={it.name} $c={it.up ? SOFT_RED : SOFT_GREEN}>
            <ItemText style={{ top: it.nameTop }}>{it.name}</ItemText>
            <ItemBar $up={it.up} style={{ top: it.top, height: it.h }} />
            <ItemText style={{ top: it.valueTop }}>{it.value}</ItemText>
          </Item>
        ))}
        <Baseline />
      </Detail>
    </FlowPanel>
  );
}

const legend: [string, string][] = [
  ['底线: 1.00', '#fff'], ['高线: 1.03', '#e61414'], ['起动线: 1.01', '#ff0'], ['主力线: 1.01', '#f0f'],
  ['散户线: 1.00', '#00dc00'], ['买进: 0.00', '#e61414'], ['超强: 0.00', '#fff'], ['拉升: 0.00', CYAN],
];
const bottomTabs: [string, string?][] = [
  ['扩展∨'], ['关联报价'], ['资金分布', '#32f0f0'], ['综合资讯', YELLOW], ['行业资讯', YELLOW], ['互动问答', YELLOW], ['新用户福利专享'],
];

export default function App() {
  return (
    <Page>
      <GlobalStyle />
      <TopBar>
        <Brand><BrandMark />通达信金融终端</Brand>
        <Menu $w={72}>
          {['行情', '市场', '资讯', '数据', '专题', '发现', '交易', '行业', '热点', 'L1L2'].map((m) => <button key={m} type="button">{m}</button>)}
        </Menu>
        <Notice><span>交易未登录</span><span>中远海控</span></Notice>
        <Menu $w={57}>
          {['功能', '版面', '公式', '选项', '帮助'].map((m) => <button key={m} type="button">{m}</button>)}
        </Menu>
        <Clock><span>14:40:49</span><span>周五</span></Clock>
        <WindowKeys>
          <button type="button" aria-label="后退"><svg width="14" height="18" viewBox="0 0 14 18"><path d="M11 2L4 9L11 16" stroke="#333" strokeWidth="3" fill="none" /></svg></button>
          <button type="button" aria-label="最小化"><svg width="16" height="18" viewBox="0 0 16 18"><path d="M1 9H15" stroke="#333" strokeWidth="3" /></svg></button>
          <button type="button" aria-label="还原"><svg width="18" height="18" viewBox="0 0 18 18"><path d="M2 6H12V16H2ZM6 6V2H16V12H12" stroke="#333" strokeWidth="3" fill="none" /></svg></button>
          <button type="button" aria-label="关闭"><svg width="18" height="18" viewBox="0 0 18 18"><path d="M2 2L16 16M16 2L2 16" stroke="#333" strokeWidth="3" /></svg></button>
        </WindowKeys>
      </TopBar>

      <Body>
        <Main>
          <ToolRow>
            <IconCell type="button" aria-label="侧栏"><SplitIcon /></IconCell>
            <Periods>
              {['分时', '1分钟', '5分钟', '15分钟', '30分钟', '60分钟', '日线', '周线', '月线', '多分时', '更多 〉'].map((t, i) => (
                <Tone key={t} type="button" $c={i === 0 ? '#32f0f0' : undefined}>{t}</Tone>
              ))}
            </Periods>
            {['竞价', '叠加', '统计', '画线', 'F10', '标记', '-自选', '返回'].map((t) => <ToolCell key={t} type="button">{t}</ToolCell>)}
          </ToolRow>

          <ChartGrid>
            <Axis $side="left">
              {leftAxis.map((t, i) => <AxisLabel key={t} $c={axisColor(i)}>{t}</AxisLabel>)}
            </Axis>
            <Column>
              <LegendRow $h={30}>
                <Txt>中远海控</Txt><Txt $c="#fff">&nbsp;分时</Txt><Txt $c="#fff">分时攻击流量</Txt><Txt $c={YELLOW}>成交量</Txt>
                <Txt>&nbsp;涨停</Txt><Txt $c={RED}>18.36</Txt><Txt>跌停</Txt><Txt $c={GREEN}>15.02</Txt><Txt $c={YELLOW}>水运</Txt>
                <Txt $c={CYAN}>[上证指数</Txt><Txt $c={CYAN}>3486.70 0.54%]</Txt>
                <Right><UpBoxIcon /><SplitIcon /></Right>
              </LegendRow>
              <PriceChart />
              <Pin $c="#ff0" style={{ left: pct(84), top: 35 }}>【资金流量比】52.84%买</Pin>
              <Pin $c="#ff0" style={{ left: pct(896), top: 35 }}>【资金攻击度】51.79 %买</Pin>
              <Pin $c="#ff0" style={{ left: pct(89), top: 73 }}>天津板块</Pin>
              <Pin $c="#f00" style={{ left: pct(213), top: 73 }}>水运</Pin>
              <Pin $c="#ff0" style={{ left: pct(124), top: 370 }}>开始攻击</Pin>
              <Pin $c="#ff0" style={{ left: pct(937), top: 370 }}>开始攻击</Pin>
              <Pin $c="#ff0" style={{ left: pct(1209), top: 370 }}>开始攻击</Pin>
              <Pin $c="#f0f" style={{ left: pct(949), top: 318 }}>攻击量</Pin>
              <Pin $c="#0f0" style={{ left: pct(1559), top: 213 }}>起爆</Pin>
              <Pin $c="#e0e0e0" style={{ left: pct(1550), top: 298 }}>16.850</Pin>
            </Column>
            <Axis $side="right">
              {rightAxis.map((t, i) => <AxisLabel key={i} $c={axisColor(i)}>{t}</AxisLabel>)}
              <AxisBadge>9483</AxisBadge>
            </Axis>

            <SubColumn>
              <LegendRow $h={27}>
                <Txt>观察分时量</Txt>
                {legend.map(([t, c]) => <Txt key={t} $c={c}>{t}</Txt>)}
                <Right><span>右键设置</span><span>×</span></Right>
              </LegendRow>
              <SubChart />
              <Pin $c="#ff0" style={{ left: pct(1453), top: 37 }}>观察分时量</Pin>
              <Pin $c="#f00" style={{ left: pct(1466), top: 78 }}>买进</Pin>
            </SubColumn>
            <SubAxis><div>1.03</div><div>1.02</div><div>1.01</div></SubAxis>
          </ChartGrid>

          <TimeAxis>
            {['09:30', '10:30', '13:00', '14:00', '15:00'].map((t) => <span key={t}>{t}</span>)}
            <TimeBadge style={{ left: '28.9%' }}>10:40</TimeBadge>
          </TimeAxis>
          <Tabs $h={25}>
            {['成交量', '指标', '量比', '买卖力道', '竞价图', '资金驱动力', '资金博弈', '大单动向', '涨跌动因', '大单差分'].map((t, i) => (
              <Tab key={t} type="button" $c={i === 1 ? '#32f0f0' : undefined}>{t}</Tab>
            ))}
            <ZoomKeys><button type="button">+</button><button type="button">−</button></ZoomKeys>
          </Tabs>
          <FlowPair>
            <Flow title="资金流向分布(仅供参考)" extra={['中远海控', '统计金额(万元)']} range="当日" net="14494.6" netColor={SOFT_RED}
              buy={['买(56%)', '71737.6']} sell={['卖(44%)', '57243.0']} share={56} items={today} />
            <Flow title="资金多空对比" range="五日" caret net="-59109.4" netColor={SOFT_GREEN}
              buy={['买(47%)', '496502.6']} sell={['卖(53%)', '555612.0']} share={47} items={fiveDay} />
          </FlowPair>
          <BottomTabs $h={28}>
            {bottomTabs.map(([t, c]) => <Tab key={t} type="button" $c={c}>{t}</Tab>)}
          </BottomTabs>
        </Main>

        <Quote>
          <QuoteHead>
            <NameRow>
              L<Name>中远海控</Name><Code>601919</Code><Flags><b>R</b>300</Flags>
            </NameRow>
            <LastRow>
              <span>16.79</span>
              <Change><svg width="22" height="20" viewBox="0 0 22 20" aria-hidden="true"><path d="M11 0L22 20H0Z" fill={RED} /></svg>0.10</Change>
              <span>0.60%</span>
            </LastRow>
          </QuoteHead>
          <Book rows={asks} />
          <SplitRule />
          <Group $pb={2}><Book rows={bids} /></Group>
          <Group><Stats rows={stats1} /></Group>
          <Group $pb={3}><Stats rows={stats2} /></Group>
          <Group $pb={2}>
            <Sheet $row={29}>
              <colgroup><col style={{ width: 140 }} /><col style={{ width: 36 }} /><col style={{ width: 93 }} /><col /></colgroup>
              <tbody>
                {flows.map(([n, v, p, c, w]) => (
                  <tr key={n}>
                    <th scope="row">{n}</th>
                    <td><FlowBar $c={c} style={{ width: w }} /></td>
                    <Cell $c={c}>{v}<Unit>亿</Unit></Cell>
                    <Cell $c={c} $pr={3}>{p}</Cell>
                  </tr>
                ))}
              </tbody>
            </Sheet>
          </Group>
          <Sheet $row={27}>
            <colgroup><col style={{ width: 70 }} /><col style={{ width: 87 }} /><col style={{ width: 94 }} /><col style={{ width: 31 }} /><col /></colgroup>
            <tbody>
              {ticks.map(([t, p, v, s, n], i) => (
                <tr key={i}>
                  <TimeCell>{t}</TimeCell>
                  <Cell $c={RED}>{p}</Cell>
                  <Cell $c={Number(v) > 80 ? PURPLE : YELLOW}>{v}<Unit>万</Unit></Cell>
                  <Cell $c={s === 'B' ? RED : GREEN}>{s}</Cell>
                  <Cell $c="#808080" $pr={4}>{n}</Cell>
                </tr>
              ))}
            </tbody>
          </Sheet>
        </Quote>

        <Strip>
          <StripButtons items={stripTop} h={482} />
          <StripRule />
          <StripButtons items={stripMid} h={173} />
          <StripRule />
          <StripButtons items={stripLow} h={483} />
        </Strip>
      </Body>

      <Status>
        <svg width="20" height="22" viewBox="0 0 20 22" aria-hidden="true">
          <rect width="20" height="22" rx="2" fill="#f0a020" /><rect x="3" y="4" width="14" height="14" fill="#fff0c0" /><rect x="6" y="8" width="8" height="7" fill="#f0b030" />
        </svg>
        <Market $c="#f00" $gap={25}><Lead><Cjk>上证</Cjk>3486.70</Lead><span>18.66</span><span>0.54%</span><Amount>2935<Cjk>亿</Cjk></Amount></Market>
        <Market $c="#f00" $gap={25}><Lead><Cjk>深证</Cjk>13437.8</Lead><span>14.91</span><span>0.11%</span><Amount>4326<Cjk>亿</Cjk></Amount></Market>
        <Market $c="#008c00" $gap={21}><Lead><Cjk>中小</Cjk>9182.89</Lead><span>-19.52</span><span>-0.21%</span><Amount>438.6<Cjk>亿</Cjk></Amount></Market>
        <Turnover><Cjk>总成交</Cjk>7202亿</Turnover>
      </Status>

      <Banner href="#home">
        <BannerName>公式指标网</BannerName>
        <svg width="80" height="80" viewBox="0 0 80 80" fill="none" aria-hidden="true">
          <path d="M5 40A35 35 0 0 1 31 6M49 6A35 35 0 0 1 75 38" stroke="#dc5a46" strokeWidth="7" />
          <path d="M75 41A35 35 0 0 1 36 75" stroke="#f0d23c" strokeWidth="7" />
          <path d="M34 2H46V14H54V38H26V14H34ZM24 41H56V47H48V50H56V56H50L58 68L50 72L42 58V50H38V58L30 72L22 68L30 56H24V50H32V47H24Z" fill="#f0d23c" />
          <circle cx="40" cy="8" r="3" fill="#7fadda" />
          <path id="ring" d="M4 42A36 36 0 0 0 36 77" />
          <text fill="#fff" fontSize="9" fontWeight="bold"><textPath href="#ring">www.9m8.cn</textPath></text>
        </svg>
        <BannerUrl>www.9m8.cn</BannerUrl>
      </Banner>
    </Page>
  );
}
